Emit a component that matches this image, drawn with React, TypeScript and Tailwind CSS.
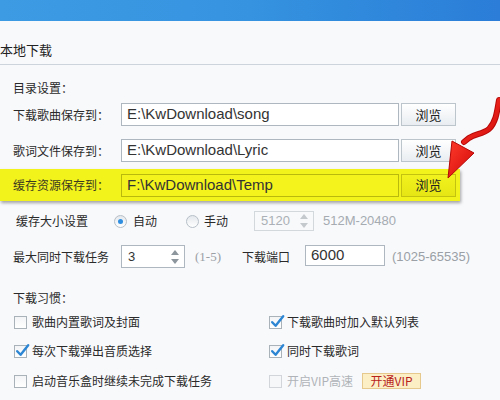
import React from "react";

const cjk = "font-['Noto_Sans_CJK_SC','Noto_Sans',sans-serif]";

function Check({ checked, disabled }: { checked?: boolean; disabled?: boolean }) {
  return (
    <div className={`relative w-[13px] h-[13px] border ${disabled ? "border-[#d2d6da] bg-[#f6f7f8]" : "border-[#a9b1b9] bg-gradient-to-b from-[#f3f4f6] to-white"} shrink-0`}>
      {checked && (
        <svg className="absolute left-[0px] top-[-3px]" width="15" height="15" viewBox="0 0 15 15">
          <path d="M2.2 8.2 L5.6 11.8 L13.2 2.2" fill="none" stroke="#2d86d3" strokeWidth="2.4" strokeLinecap="round" strokeLinejoin="round" />
        </svg>
      )}
    </div>
  );
}

function Radio({ on }: { on?: boolean }) {
  return (
    <div className="w-[13px] h-[13px] rounded-full border border-[#b7bfc7] bg-gradient-to-b from-[#e4e8ec] to-white flex items-center justify-center shrink-0">
      {on && <div className="w-[5px] h-[5px] rounded-full bg-[#2f8ee0]" />}
    </div>
  );
}

function SpinArrows({ light }: { light?: boolean }) {
  const c = light ? "#c4c9ce" : "#8d959d";
  return (
    <svg width="10" height="18" viewBox="0 0 10 18">
      <path d="M1 7 L5 2 L9 7 Z" fill={c} />
      <path d="M1 11 L5 16 L9 11 Z" fill={c} />
    </svg>
  );
}

function PathRow({ label, value, yellow }: { label: string; value: string; yellow?: boolean }) {
  return (
    <div className="flex items-center">
      <div className={`w-[108px] text-[12px] leading-[18px] ${yellow ? "text-[#3b3b20]" : "text-[#2a2a2a]"}`}>{label}</div>
      <div
        className={`w-[278px] h-[23px] border flex items-center pl-[5px] text-[15px] font-['Liberation_Sans',sans-serif] ${
          yellow ? "h-[22px] border-[#b9b80c] bg-[#f4f41c] text-[#333]" : "border-[#aeb7c0] bg-white text-[#333]"
        }`}
      >
        {value}
      </div>
      <div
        className={`ml-[2px] w-[55px] h-[23px] border flex items-center justify-center text-[13px] ${
          yellow
            ? "h-[22px] border-[#c4c210] bg-gradient-to-b from-[#f2f21e] to-[#e6e614] text-[#222]"
            : "border-[#bcc4cc] bg-gradient-to-b from-white to-[#e9edf1] text-[#222]"
        }`}
      >
        浏览
      </div>
    </div>
  );
}

export default function App() {
  return (
    <div className={`relative w-[500px] h-[400px] overflow-hidden bg-[#f8f9fb] ${cjk}`}>
      <div className="h-[21px] bg-gradient-to-r from-[#3d9be4] via-[#3593e0] to-[#2b7dd7]" />
      <div className="pt-[20px] pb-[5px] border-b border-[#cdd4dc] text-[13px] leading-[18px] text-[#222]">本地下载</div>

      <div className="pl-[13px] mt-[14px] text-[12px] leading-[18px] text-[#2a2a2a]">目录设置：</div>

      <div className="pl-[13px] mt-[6px]">
        <PathRow label="下载歌曲保存到：" value="E:\KwDownload\song" />
      </div>
      <div className="pl-[13px] mt-[13px]">
        <PathRow label="歌词文件保存到：" value="E:\KwDownload\Lyric" />
      </div>
      <div className="mt-[7px] w-[460px] h-[32px] bg-[#f3f31c] pl-[13px] flex items-center shadow-[1px_2px_3px_rgba(0,0,0,0.35)]">
        <PathRow label="缓存资源保存到：" value="F:\KwDownload\Temp" yellow />
      </div>

      <div className="pl-[16px] mt-[10px] h-[20px] flex items-center text-[12px] text-[#2a2a2a]">
        <div className="w-[98px]">缓存大小设置</div>
        <Radio on />
        <div className="ml-[6px]">自动</div>
        <div className="ml-[29px]"><Radio /></div>
        <div className="ml-[5px]">手动</div>
        <div className="ml-[26px] w-[60px] h-[20px] border border-[#d3d8dd] bg-[#f8f9fa] flex items-center justify-between pl-[6px] pr-[4px] text-[13px] text-[#aab0b6] font-['Liberation_Sans',sans-serif]">
          <span>5120</span>
          <SpinArrows light />
        </div>
        <div className="ml-[9px] text-[13px] text-[#a5abb1] font-['Liberation_Sans',sans-serif]">512M-20480</div>
      </div>

      <div className="pl-[13px] mt-[14px] h-[23px] flex items-center text-[12px] text-[#2a2a2a]">
        <div className="w-[108px]">最大同时下载任务</div>
        <div className="w-[64px] h-[23px] border border-[#aeb7c0] bg-white flex items-center justify-between pl-[6px] pr-[4px] text-[13px] text-[#333] font-['Liberation_Sans',sans-serif]">
          <span>3</span>
          <SpinArrows />
        </div>
        <div className="ml-[10px] text-[13px] text-[#9aa0a6] font-['Liberation_Serif',serif]">(1-5)</div>
        <div className="ml-[21px]">下载端口</div>
        <div className="ml-[15px] -mt-[3px] w-[80px] h-[21px] border border-[#aeb7c0] bg-white flex items-center pl-[5px] text-[15px] text-[#333] font-['Liberation_Sans',sans-serif]">6000</div>
        <div className="ml-[7px] text-[13px] text-[#9aa0a6] font-['Liberation_Sans',sans-serif]">(1025-65535)</div>
      </div>

      <div className="pl-[13px] mt-[21px] text-[12px] leading-[18px] text-[#2a2a2a]">下载习惯：</div>

      <div className="pl-[14px] text-[12px] text-[#2a2a2a]">
        <div className="mt-[6px] h-[18px] grid grid-cols-[255px_1fr] items-center">
          <div className="flex items-center gap-[5px]"><Check /><span>歌曲内置歌词及封面</span></div>
          <div className="flex items-center gap-[5px]"><Check checked /><span>下载歌曲时加入默认列表</span></div>
        </div>
        <div className="mt-[11px] h-[18px] grid grid-cols-[255px_1fr] items-center">
          <div className="flex items-center gap-[5px]"><Check checked /><span>每次下载弹出音质选择</span></div>
          <div className="flex items-center gap-[5px]"><Check checked /><span>同时下载歌词</span></div>
        </div>
        <div className="mt-[12px] h-[18px] grid grid-cols-[255px_1fr] items-center">
          <div className="flex items-center gap-[5px]"><Check /><span>启动音乐盒时继续未完成下载任务</span></div>
          <div className="flex items-center gap-[5px]">
            <Check disabled />
            <span className="text-[#b0b4b8]">开启VIP高速</span>
            <div className="ml-[4px] w-[59px] h-[16px] border border-[#e6c98c] bg-[#fcefc6] flex items-center justify-center text-[12px] text-[#b8231c]">开通VIP</div>
          </div>
        </div>
      </div>

      <svg className="absolute left-0 top-0 pointer-events-none" width="500" height="400" viewBox="0 0 500 400">
        <defs>
          <linearGradient id="ar" x1="0" y1="0" x2="1" y2="1">
            <stop offset="0" stopColor="#ff3a2a" />
            <stop offset="1" stopColor="#d10a0a" />
          </linearGradient>
        </defs>
        <path d="M499 100 C497 112 496 122 489 129 C483 134 475 134 469 138 L464 142" fill="none" stroke="#b80808" strokeWidth="6" strokeLinecap="round" />
        <path d="M499 100 C497 112 496 122 489 129 C483 134 475 134 469 138 L464 142" fill="none" stroke="url(#ar)" strokeWidth="4" strokeLinecap="round" />
        <path d="M452 141 L474 153 L448 178 Z" fill="url(#ar)" stroke="#b40606" strokeWidth="1" strokeLinejoin="round" />
      </svg>
    </div>
  );
}
